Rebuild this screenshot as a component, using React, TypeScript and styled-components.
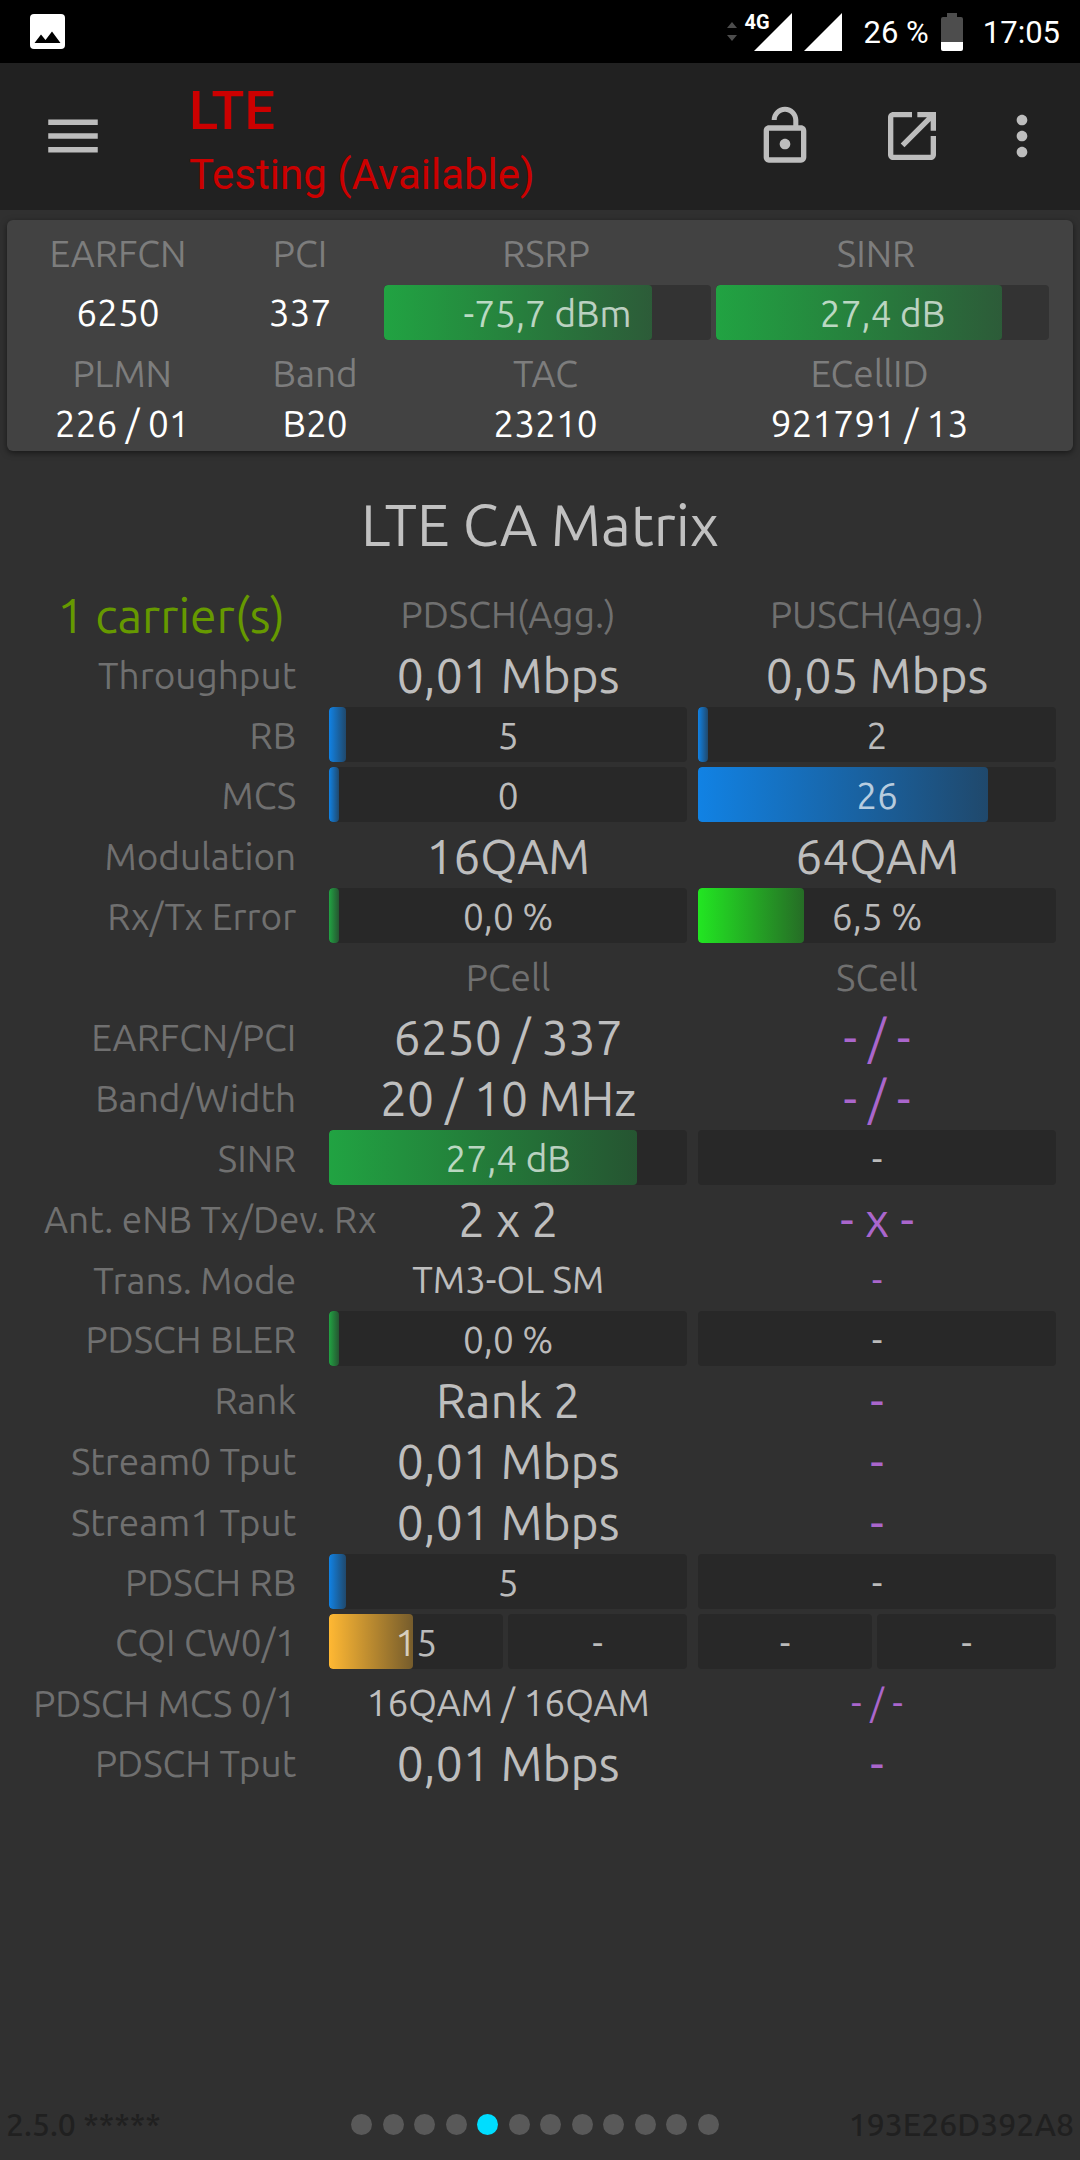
import React from "react";
import styled, { createGlobalStyle } from "styled-components";

const BODY_FONT = '"Ubuntu", "Noto Sans", "Open Sans", sans-serif';

const GlobalStyle = createGlobalStyle`
  * { box-sizing: border-box; }
  body {
    margin: 0;
    background: #303030;
    color: rgba(255, 255, 255, 0.7);
    font-family: ${BODY_FONT};
  }
`;

const Screen = styled.div`
  display: flex;
  flex-direction: column;
  min-height: 100vh;
`;

/* ---------- status bar ---------- */

const StatusBar = styled.div`
  display: flex;
  align-items: center;
  height: 63px;
  padding: 0 20px 0 30px;
  background: #000;
  color: #fff;
  font: 400 31px/1 Roboto, sans-serif;
`;

const StatusRight = styled.div`
  display: flex;
  align-items: center;
  margin-left: auto;
`;

const SignalGroup = styled.div`
  position: relative;
  display: flex;
  gap: 12px;
  margin: 0 22px 0 17px;
`;

const NetworkBadge = styled.span`
  position: absolute;
  left: -9px;
  top: 0;
  font-size: 20px;
  font-weight: 700;
  line-height: 18px;
`;

const StatusText = styled.span`
  padding-top: 2px;
`;

const BatteryIcon = styled.svg`
  margin: 0 20px 0 12px;
`;

/* ---------- app bar ---------- */

const AppBar = styled.header`
  display: flex;
  align-items: center;
  height: 147px;
  padding: 0 26px 2px 40px;
  background: #212121;
`;

const Heading = styled.div`
  flex: 1;
  padding-top: 14px;
  margin-left: 83px;
  color: #cc0000;
  font-family: Roboto, sans-serif;
  line-height: 64px;
`;

const Network = styled.h1`
  margin: 0;
  font-size: 54px;
  font-weight: 500;
  line-height: inherit;
`;

const NetworkState = styled.p`
  margin: 0;
  font-size: 42px;
`;

const IconButton = styled.button<{ $gap?: number }>`
  display: block;
  padding: 0;
  margin-left: ${(p) => p.$gap ?? 0}px;
  border: 0;
  background: none;
  color: #bdbdbd;

  svg { display: block; fill: currentColor; }
`;

/* ---------- bars ---------- */

const TONES = {
  green: "33, 163, 66",
  lime: "34, 230, 34",
  blue: "17, 130, 228",
  amber: "255, 184, 51",
};
type Tone = keyof typeof TONES;

const Track = styled.div<{ $track: string; $grow: number }>`
  position: relative;
  flex: ${(p) => p.$grow} 1 0;
  height: 55px;
  overflow: hidden;
  border-radius: 4px;
  background: ${(p) => p.$track};
  font-size: 37px;
  line-height: 58px;
  text-align: center;
`;

const Fill = styled.div<{ $tone: Tone }>`
  position: absolute;
  inset: 0 auto 0 0;
  min-width: 10px;
  border-radius: 4px;
  background: linear-gradient(
    to right,
    rgb(${(p) => TONES[p.$tone]}),
    rgba(${(p) => TONES[p.$tone]}, 0.36)
  );
`;

const Reading = styled.span`
  position: relative;
`;

type MeterProps = { text: string; level?: number; tone?: Tone; track?: string; grow?: number };

function Meter({ text, level, tone = "green", track = "#282828", grow = 1 }: MeterProps) {
  return (
    <Track $track={track} $grow={grow}>
      {level !== undefined && <Fill $tone={tone} style={{ width: `${level}%` }} />}
      <Reading>{text}</Reading>
    </Track>
  );
}

/* ---------- serving cell card ---------- */

const Card = styled.section`
  margin: 10px 7px 0;
  padding: 6px 24px 5px 8px;
  border-radius: 6px;
  background: #424242;
  box-shadow: 0 2px 6px rgba(0, 0, 0, 0.5);
`;

const CardRow = styled.div<{ $columns: string }>`
  display: grid;
  grid-template-columns: ${(p) => p.$columns};
  align-items: center;
  text-align: center;
`;

const CardLabels = styled(CardRow)`
  color: rgba(255, 255, 255, 0.31);
  font-size: 37px;
  line-height: 56px;
`;

const CardValues = styled(CardRow)`
  color: #fff;
  font-size: 37px;
  line-height: 44px;
`;

const CardMeters = styled(CardValues)`
  margin: 3px 0 6px;
`;

const MeterPair = styled.div`
  display: flex;
  gap: 5px;
  padding-left: 5px;
  color: rgba(255, 255, 255, 0.7);
`;

/* ---------- carrier aggregation matrix ---------- */

const Title = styled.h2`
  margin: 42px 0 28px;
  font-size: 58px;
  font-weight: 400;
  line-height: 64px;
  text-align: center;
`;

const Matrix = styled.table`
  width: calc(100% - 26px);
  margin: 0 13px;
  border-collapse: collapse;
  table-layout: fixed;
`;

const LabelColumn = styled.col`
  width: 30%;
`;

const Row = styled.tr<{ $kind: Kind }>`
  height: ${(p) => (p.$kind === "large" ? 61 : 60)}px;
`;

const HeadCell = styled.th`
  padding: 0 11px 1px 0;
  color: rgba(255, 255, 255, 0.31);
  font-size: 37px;
  font-weight: 400;
  line-height: 48px;
`;

const Carriers = styled(HeadCell)`
  padding-right: 0;
  color: #669900;
  font-size: 48px;
`;

const LabelCell = styled(HeadCell)<{ $bar: boolean; $wide?: boolean }>`
  padding: 0 33px ${(p) => (p.$bar ? 3 : 1)}px ${(p) => (p.$wide ? 31 : 0)}px;
  text-align: ${(p) => (p.$wide ? "left" : "right")};
  white-space: nowrap;
`;

const ValueCell = styled.td<{ $size: number; $empty?: boolean }>`
  padding: 0 11px 3px 0;
  color: ${(p) => (p.$empty ? "#aa66cc" : "inherit")};
  font-size: ${(p) => p.$size}px;
  line-height: 56px;
  text-align: center;
  white-space: nowrap;
`;

const BarCell = styled.td`
  padding: 0 11px 5px 0;
`;

const Bars = styled.div`
  display: flex;
  gap: 5px;
`;

type Kind = "large" | "small" | "bar" | "head";
type MatrixRow = {
  label: string;
  kind: Kind;
  wide?: boolean;
  cells: (string | MeterProps[])[];
};

const rows: MatrixRow[] = [
  { label: "Throughput", kind: "large", cells: ["0,01 Mbps", "0,05 Mbps"] },
  { label: "RB", kind: "bar", cells: [[{ text: "5", level: 4.8, tone: "blue" }], [{ text: "2", level: 2, tone: "blue" }]] },
  { label: "MCS", kind: "bar", cells: [[{ text: "0", level: 0, tone: "blue" }], [{ text: "26", level: 81, tone: "blue" }]] },
  { label: "Modulation", kind: "large", cells: ["16QAM", "64QAM"] },
  { label: "Rx/Tx Error", kind: "bar", cells: [[{ text: "0,0 %", level: 0 }], [{ text: "6,5 %", level: 29.6, tone: "lime" }]] },
  { label: "", kind: "head", cells: ["PCell", "SCell"] },
  { label: "EARFCN/PCI", kind: "large", cells: ["6250 / 337", "- / -"] },
  { label: "Band/Width", kind: "large", cells: ["20 / 10 MHz", "- / -"] },
  { label: "SINR", kind: "bar", cells: [[{ text: "27,4 dB", level: 86 }], [{ text: "-" }]] },
  { label: "Ant. eNB Tx/Dev. Rx", kind: "large", wide: true, cells: ["2 x 2", "- x -"] },
  { label: "Trans. Mode", kind: "small", cells: ["TM3-OL SM", "-"] },
  { label: "PDSCH BLER", kind: "bar", cells: [[{ text: "0,0 %", level: 0 }], [{ text: "-" }]] },
  { label: "Rank", kind: "large", cells: ["Rank 2", "-"] },
  { label: "Stream0 Tput", kind: "large", cells: ["0,01 Mbps", "-"] },
  { label: "Stream1 Tput", kind: "large", cells: ["0,01 Mbps", "-"] },
  { label: "PDSCH RB", kind: "bar", cells: [[{ text: "5", level: 4.8, tone: "blue" }], [{ text: "-" }]] },
  {
    label: "CQI CW0/1",
    kind: "bar",
    cells: [
      [{ text: "15", level: 48, tone: "amber", grow: 174 }, { text: "-", grow: 179 }],
      [{ text: "-", grow: 174 }, { text: "-", grow: 179 }],
    ],
  },
  { label: "PDSCH MCS 0/1", kind: "small", cells: ["16QAM / 16QAM", "- / -"] },
  { label: "PDSCH Tput", kind: "large", cells: ["0,01 Mbps", "-"] },
];

function MatrixLine({ row }: { row: MatrixRow }) {
  if (row.kind === "head") {
    return (
      <Row $kind="head">
        <td />
        {row.cells.map((c) => (
          <HeadCell key={String(c)} scope="col">{String(c)}</HeadCell>
        ))}
      </Row>
    );
  }
  return (
    <Row $kind={row.kind}>
      <LabelCell scope="row" $bar={row.kind === "bar"} $wide={row.wide}>{row.label}</LabelCell>
      {row.cells.map((cell, i) =>
        typeof cell === "string" ? (
          <ValueCell key={i} $size={row.kind === "large" ? 48 : 37} $empty={cell.startsWith("-")}>
            {cell}
          </ValueCell>
        ) : (
          <BarCell key={i}>
            <Bars>
              {cell.map((m, j) => <Meter key={j} {...m} />)}
            </Bars>
          </BarCell>
        )
      )}
    </Row>
  );
}

/* ---------- footer ---------- */

const Footer = styled.footer`
  display: grid;
  grid-template-columns: 1fr 378px 1fr;
  align-items: center;
  margin-top: auto;
  padding: 0 6px 15px;
  color: #202020;
  font-size: 32px;
  font-weight: 500;
  line-height: 42px;
`;

const Serial = styled.span`
  text-align: right;
`;

const Pager = styled.nav`
  display: grid;
  grid-template-columns: repeat(12, 1fr);
`;

const Dot = styled.button<{ $active: boolean }>`
  width: 21px;
  height: 21px;
  padding: 0;
  border: 0;
  border-radius: 50%;
  background: ${(p) => (p.$active ? "#00ddff" : "#595959")};
`;

export default function App() {
  return (
    <Screen>
      <GlobalStyle />
      <StatusBar>
        <svg width="35" height="35" viewBox="0 0 35 35" aria-hidden="true">
          <rect width="35" height="35" rx="4" fill="#fff" />
          <path d="M4.500 29L11 20.500L15.500 26L22 17.500L30.500 29Z" fill="#000" />
        </svg>
        <StatusRight>
          <svg width="10" height="20" viewBox="0 0 10 20" aria-hidden="true">
            <path d="M0 6L5 0L10 6ZM0 13H10L5 19Z" fill="#4d4d4d" />
          </svg>
          <SignalGroup>
            <NetworkBadge>4G</NetworkBadge>
            <svg width="38" height="38" viewBox="0 0 38 38" aria-hidden="true">
              <path d="M0 38L38 0V38Z" fill="#fff" />
            </svg>
            <svg width="38" height="38" viewBox="0 0 38 38" aria-hidden="true">
              <path d="M0 38L38 0V38Z" fill="#fff" />
            </svg>
          </SignalGroup>
          <StatusText>26 %</StatusText>
          <BatteryIcon width="22" height="38" viewBox="0 0 22 38" aria-hidden="true">
            <path d="M6 0H16V4H20Q22 4 22 6V29H0V6Q0 4 2 4H6Z" fill="#4d4d4d" />
            <path d="M0 29H22V36Q22 38 20 38H2Q0 38 0 36Z" fill="#fff" />
          </BatteryIcon>
          <StatusText>17:05</StatusText>
        </StatusRight>
      </StatusBar>

      <AppBar>
        <IconButton aria-label="Menu">
          <svg width="66" height="66" viewBox="0 0 24 24">
            <path d="M3 18h18v-2H3v2zm0-5h18v-2H3v2zm0-7v2h18V6H3z" />
          </svg>
        </IconButton>
        <Heading>
          <Network>LTE</Network>
          <NetworkState>Testing (Available)</NetworkState>
        </Heading>
        <IconButton aria-label="Unlock">
          <svg width="64" height="64" viewBox="0 0 24 24">
            <path d="M12 17c1.100 0 2-.9 2-2s-.9-2-2-2-2 .9-2 2 .9 2 2 2zm6-9h-1V6c0-2.760-2.240-5-5-5S7 3.240 7 6h1.900c0-1.710 1.390-3.100 3.100-3.100 1.710 0 3.100 1.390 3.100 3.100v2H6c-1.100 0-2 .9-2 2v10c0 1.100.9 2 2 2h12c1.100 0 2-.9 2-2V10c0-1.100-.9-2-2-2zm0 12H6V10h12v10z" />
          </svg>
        </IconButton>
        <IconButton aria-label="Open in new window" $gap={63}>
          <svg width="64" height="64" viewBox="0 0 24 24">
            <path d="M19 19H5V5h7V3H5c-1.110 0-2 .9-2 2v14c0 1.100.89 2 2 2h14c1.100 0 2-.9 2-2v-7h-2v7zM14 3v2h3.590l-9.830 9.830 1.410 1.410L19 6.410V10h2V3h-7z" />
          </svg>
        </IconButton>
        <IconButton aria-label="More options" $gap={46}>
          <svg width="64" height="64" viewBox="0 0 24 24">
            <path d="M12 8c1.100 0 2-.9 2-2s-.9-2-2-2-2 .9-2 2 .9 2 2 2zm0 2c-1.100 0-2 .9-2 2s.9 2 2 2 2-.9 2-2-.9-2-2-2zm0 6c-1.100 0-2 .9-2 2s.9 2 2 2 2-.9 2-2-.9-2-2-2z" />
          </svg>
        </IconButton>
      </AppBar>

      <Card>
        <CardLabels $columns="206fr 158fr 334fr 326fr 10fr">
          <span>EARFCN</span>
          <span>PCI</span>
          <span>RSRP</span>
          <span>SINR</span>
        </CardLabels>
        <CardMeters $columns="206fr 158fr 670fr">
          <span>6250</span>
          <span>337</span>
          <MeterPair>
            <Meter text="-75,7 dBm" level={82} track="#333333" grow={327} />
            <Meter text="27,4 dB" level={86} track="#333333" grow={333} />
          </MeterPair>
        </CardMeters>
        <CardLabels $columns="215fr 172fr 290fr 360fr">
          <span>PLMN</span>
          <span>Band</span>
          <span>TAC</span>
          <span>ECellID</span>
        </CardLabels>
        <CardValues $columns="215fr 172fr 290fr 360fr">
          <span>226 / 01</span>
          <span>B20</span>
          <span>23210</span>
          <span>921791 / 13</span>
        </CardValues>
      </Card>

      <Title>LTE CA Matrix</Title>

      <Matrix>
        <colgroup>
          <LabelColumn />
          <col />
          <col />
        </colgroup>
        <thead>
          <Row $kind="large">
            <Carriers scope="col">1 carrier(s)</Carriers>
            <HeadCell scope="col">PDSCH(Agg.)</HeadCell>
            <HeadCell scope="col">PUSCH(Agg.)</HeadCell>
          </Row>
        </thead>
        <tbody>
          {rows.map((row, i) => <MatrixLine key={i} row={row} />)}
        </tbody>
      </Matrix>

      <Footer>
        <span>2.5.0 *****</span>
        <Pager aria-label="Pages">
          {Array.from({ length: 12 }, (_, i) => (
            <Dot key={i} $active={i === 4} aria-label={`Page ${i + 1}`} />
          ))}
        </Pager>
        <Serial>193E26D392A8</Serial>
      </Footer>
    </Screen>
  );
}
